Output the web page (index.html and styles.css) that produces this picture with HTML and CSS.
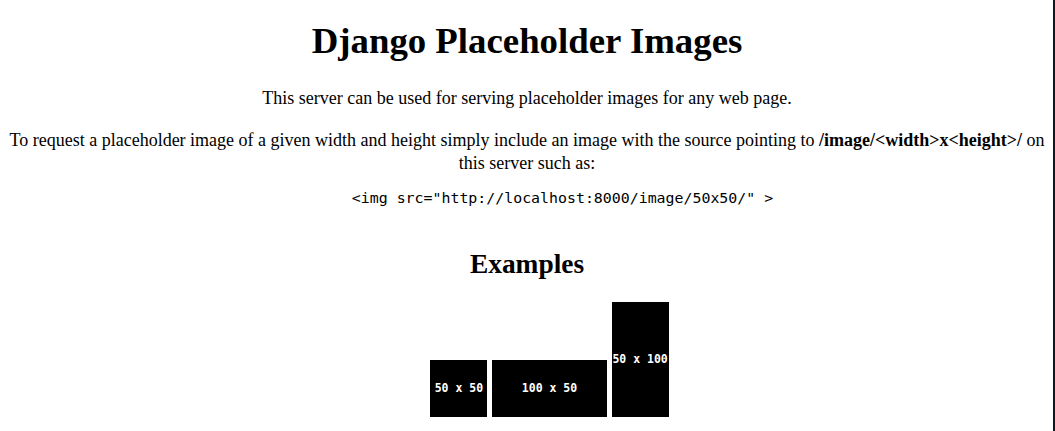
FILE: index.html
```html
<!DOCTYPE html>
<html lang="en">
<head>
<meta charset="utf-8">
<title>Django Placeholder Images</title>
<link rel="stylesheet" href="styles.css">
</head>
<body>
<div class="page">
  <h1 class="title">Django Placeholder Images</h1>
  <p class="text">This server can be used for serving placeholder images for any web page.</p>
  <p class="text text-usage">To request a placeholder image of a given width and height simply include an image with the source pointing to <b>/image/&lt;width&gt;x&lt;height&gt;/</b> on this server such as:</p>
  <pre class="code">&lt;img src="http://localhost:8000/image/50x50/" &gt;</pre>
  <h2 class="subtitle">Examples</h2>
  <div class="examples">
    <span class="ph ph-50x50">50 x 50</span>
    <span class="ph ph-100x50">100 x 50</span>
    <span class="ph ph-50x100">50 x 100</span>
  </div>
</div>
<div class="edge"></div>
</body>
</html>
```
FILE: styles.css
```css
html, body {
  background: #fff;
}
body {
  margin: 0;
  padding: 0 10px 0 9px;
  font-family: "Liberation Serif", "Times New Roman", serif;
  font-size: 18px;
  color: #000;
  overflow: hidden;
}
.page {
  text-align: center;
}
.title {
  font-size: 36.8px;
  line-height: 42px;
  font-weight: bold;
  margin: 20px 0 25px;
}
.text {
  line-height: 22px;
  margin: 0 0 20px;
}
.text-usage {
  line-height: 23px;
  margin-bottom: 14px;
}
.code {
  font-family: "DejaVu Sans Mono", "Liberation Mono", monospace;
  font-size: 14.9px;
  line-height: 18px;
  margin: 0 0 41px;
  padding-left: 71px;
  text-align: center;
}
.subtitle {
  font-size: 27.4px;
  line-height: 32px;
  font-weight: bold;
  margin: 0 0 22px;
}
.examples {
  padding-left: 45px;
  text-align: center;
  font-size: 18.4px;
  line-height: 21px;
}
.ph {
  display: inline-flex;
  align-items: center;
  justify-content: center;
  background: #000;
  color: #fff;
  font-family: "DejaVu Sans Mono", "Liberation Mono", monospace;
  font-weight: bold;
  font-size: 11.5px;
  vertical-align: bottom;
  white-space: pre;
}
.ph-50x50 { width: 57px; height: 57px; }
.ph-100x50 { width: 115px; height: 57px; }
.ph-50x100 { width: 57px; height: 115px; }
.edge {
  position: fixed;
  top: 0;
  right: 0;
  width: 2px;
  height: 100%;
  background: #0e1622;
}
```
